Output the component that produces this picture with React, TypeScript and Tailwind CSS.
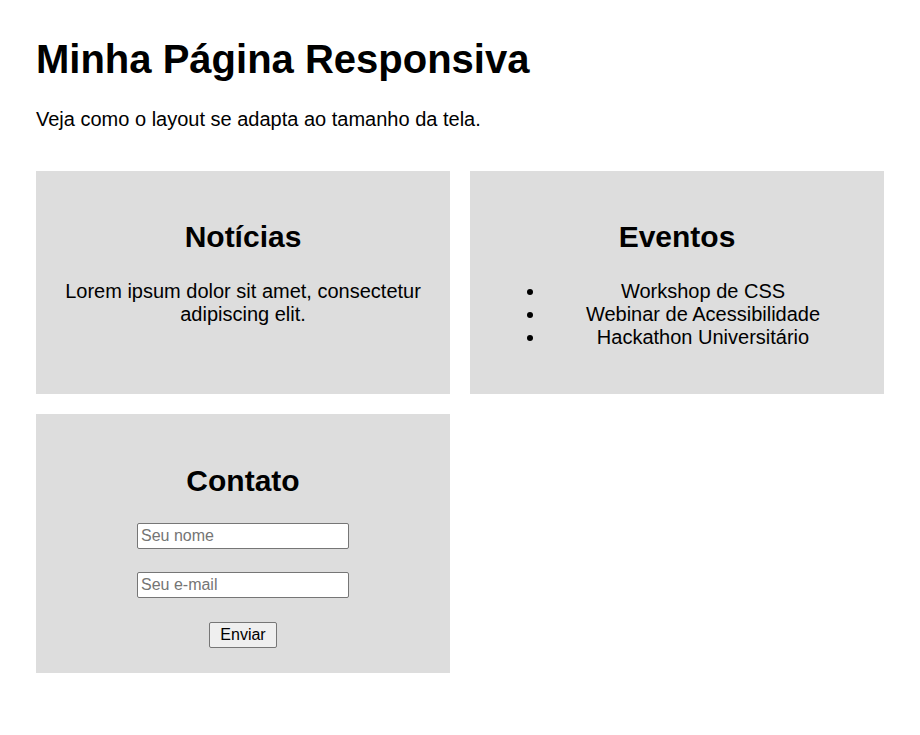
const App = () => {
  const eventos = ["Workshop de CSS", "Webinar de Acessibilidade", "Hackathon Universitário"];

  return (
    <div className="min-h-screen bg-white px-9 pt-9 pb-10 text-black" style={{ fontFamily: '"Liberation Sans", Arial, sans-serif' }}>
      <h1 className="text-[40px] font-bold leading-[46px] mb-[26px]">Minha Página Responsiva</h1>
      <p className="text-[20px] leading-[23px] mb-10">Veja como o layout se adapta ao tamanho da tela.</p>

      <div className="grid grid-cols-2 gap-5">
        {/* Notícias */}
        <section className="bg-[#dddddd] px-6 pt-6 pb-5 text-center">
          <h2 className="text-[30px] font-bold leading-[34.5px] mt-[25px] mb-[25px]">Notícias</h2>
          <p className="text-[20px] leading-[23px]">Lorem ipsum dolor sit amet, consectetur adipiscing elit.</p>
        </section>

        {/* Eventos */}
        <section className="bg-[#dddddd] px-6 pt-6 pb-[25px] text-center">
          <h2 className="text-[30px] font-bold leading-[34.5px] mt-[25px] mb-[25px]">Eventos</h2>
          <ul className="list-disc list-outside pl-[52px] text-[20px] leading-[23px] mb-5">
            {eventos.map((e) => (
              <li key={e}>{e}</li>
            ))}
          </ul>
        </section>

        {/* Contato */}
        <section className="bg-[#dddddd] px-6 pt-[25px] pb-[25px] text-center">
          <h2 className="text-[30px] font-bold leading-[34.5px] mt-[25px] mb-[25px]">Contato</h2>
          <form className="flex flex-col items-center gap-[23px]" onSubmit={(ev) => ev.preventDefault()}>
            <input
              type="text"
              placeholder="Seu nome"
              className="w-[212px] h-[26px] bg-white border border-[#767676] rounded-[2px] px-[3px] text-[16px] placeholder:text-[#757575] outline-none"
            />
            <input
              type="email"
              placeholder="Seu e-mail"
              className="w-[212px] h-[26px] bg-white border border-[#767676] rounded-[2px] px-[3px] text-[16px] placeholder:text-[#757575] outline-none"
            />
            <button
              type="submit"
              className="mt-px w-[68px] h-[26px] bg-[#efefef] border border-[#767676] rounded-[2px] text-[16px] leading-none"
            >
              Enviar
            </button>
          </form>
        </section>
      </div>
    </div>
  );
};

export default App;
